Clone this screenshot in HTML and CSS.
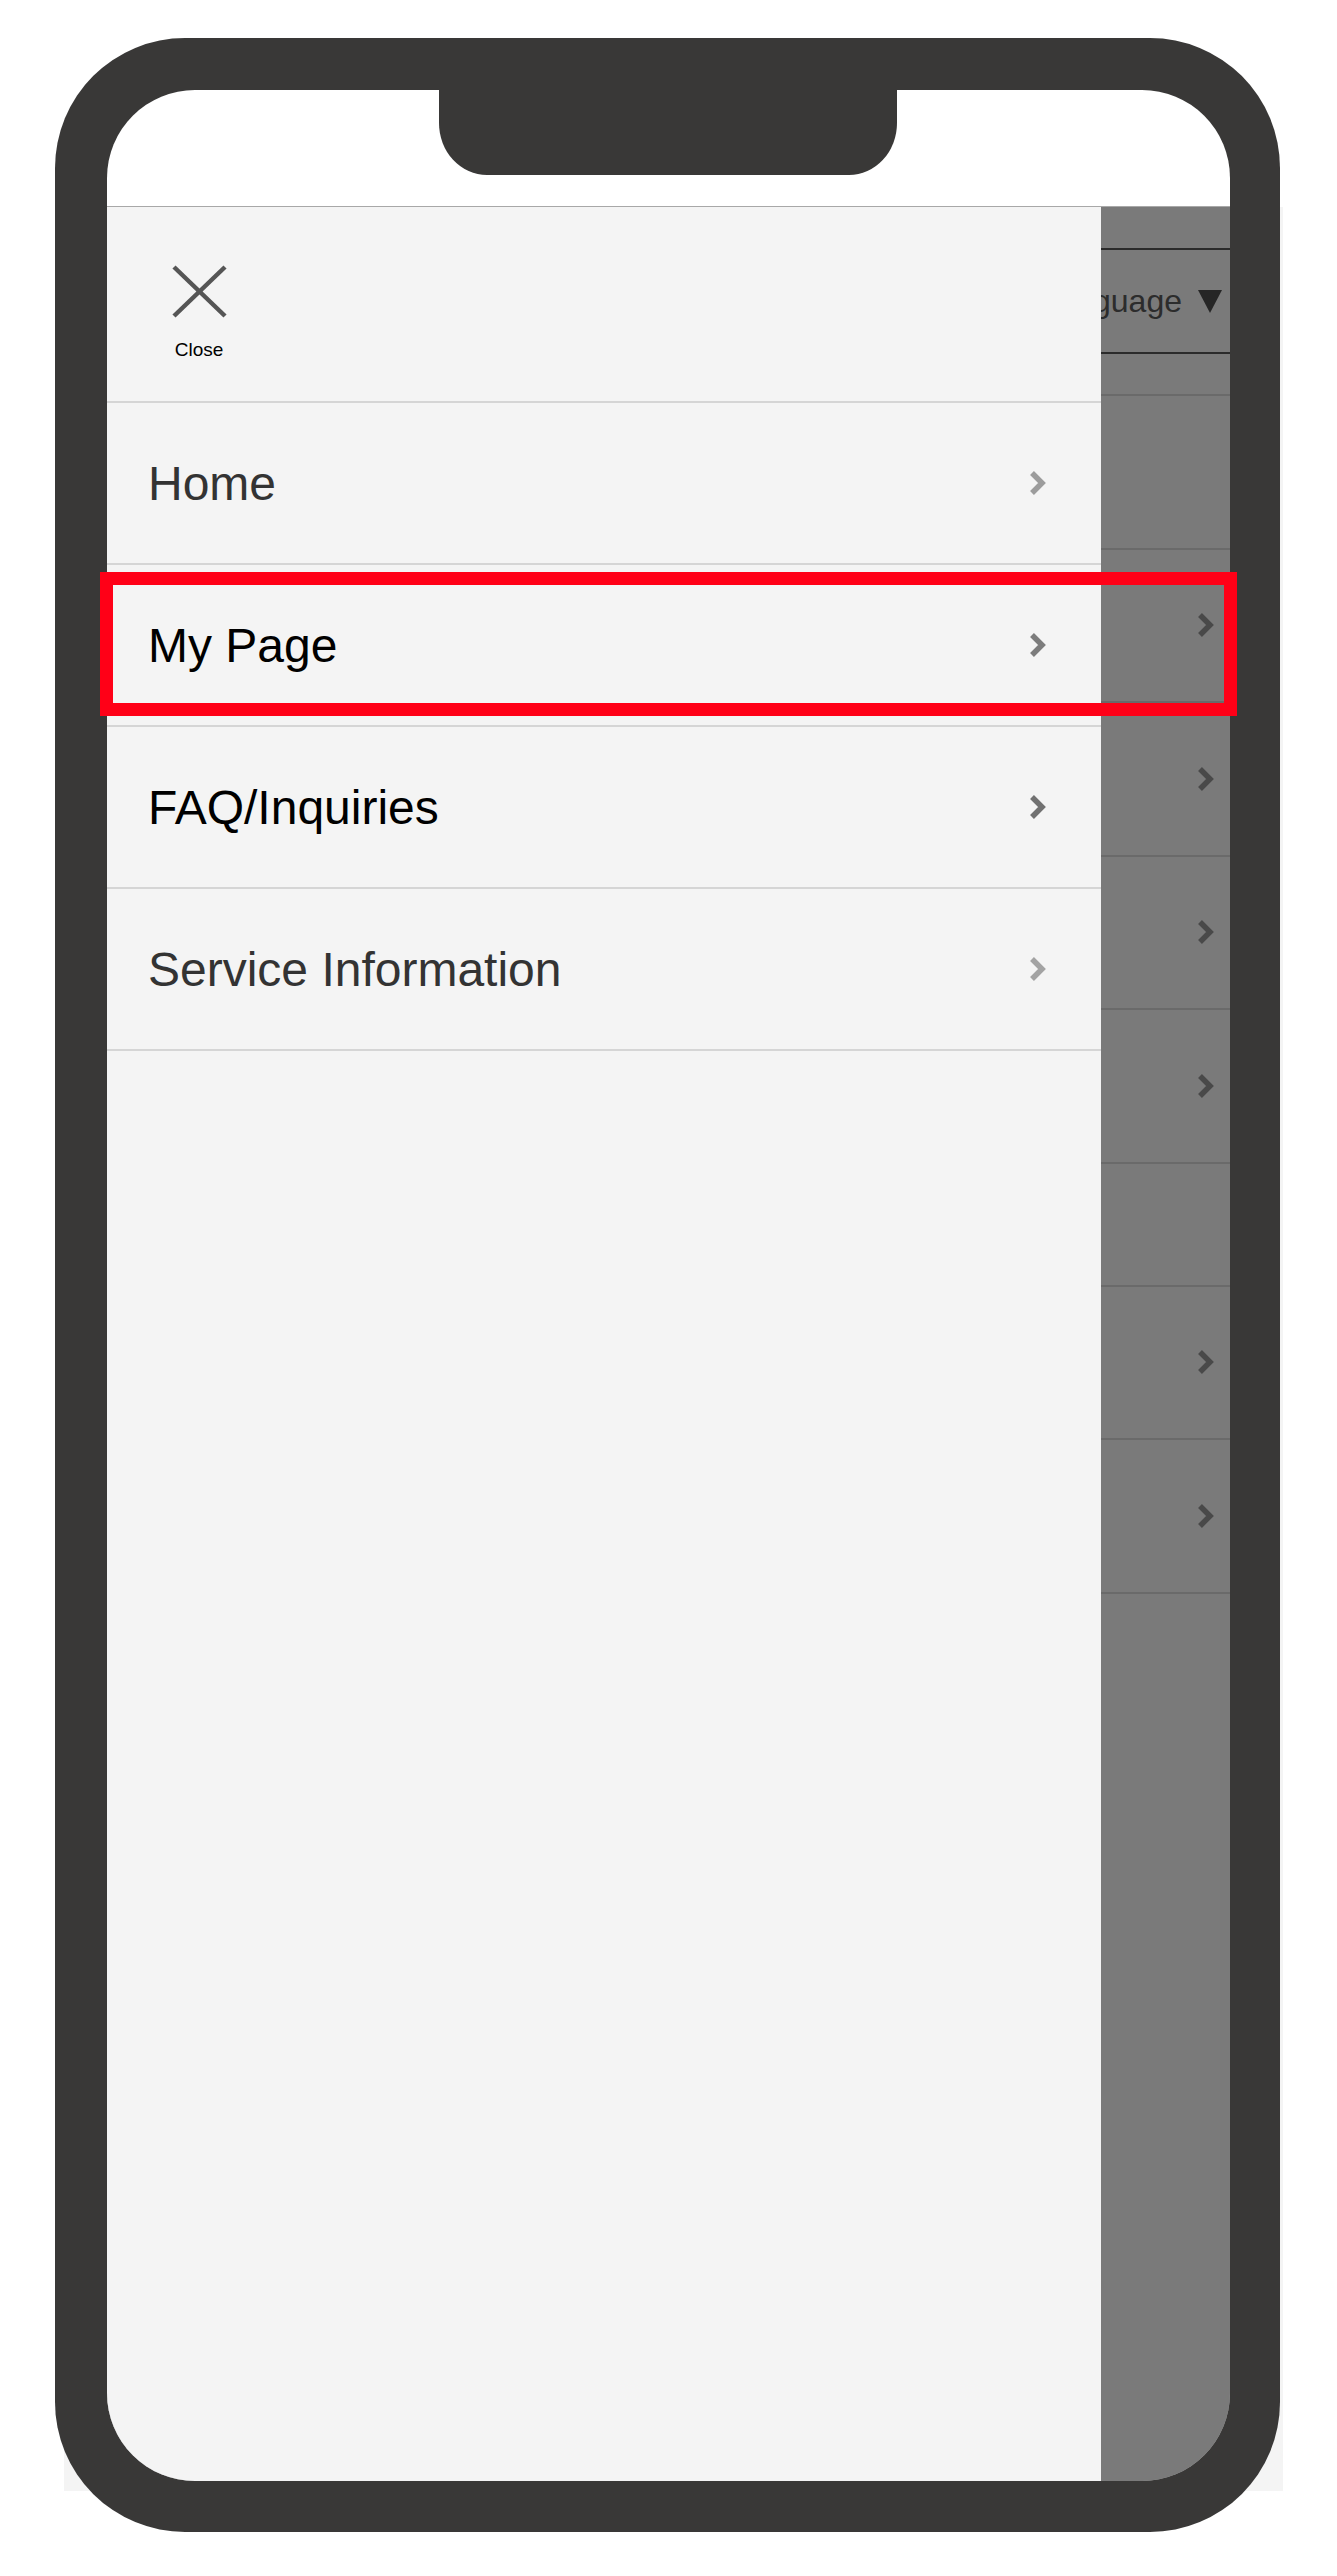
FILE: index.html
```html
<!DOCTYPE html>
<html>
<head>
    <meta charset="UTF-8">
    <meta name="viewport" content="width=device-width, initial-scale=1.0">
    <title>Menu</title>
    <link rel="stylesheet" href="styles.css">
</head>
<body>
    <div class="stage">
        <div class="backdrop"></div>
        <div class="device">
            <div class="screen">
                <div class="notch"></div>
                <div class="statusbar"></div>
                <div class="viewport">
                    <!-- page under the drawer -->
                    <div class="page">
                        <div class="page-header">
                            <div class="lang-select">Language <span class="caret"></span></div>
                        </div>
                        <ul class="page-nav">
                            <li></li>
                            <li><svg class="chev" viewBox="0 0 17 24"><polyline points="3,2 13,12 3,22"/></svg></li>
                            <li><svg class="chev" viewBox="0 0 17 24"><polyline points="3,2 13,12 3,22"/></svg></li>
                            <li><svg class="chev" viewBox="0 0 17 24"><polyline points="3,2 13,12 3,22"/></svg></li>
                            <li><svg class="chev" viewBox="0 0 17 24"><polyline points="3,2 13,12 3,22"/></svg></li>
                            <li class="short"></li>
                            <li><svg class="chev" viewBox="0 0 17 24"><polyline points="3,2 13,12 3,22"/></svg></li>
                            <li><svg class="chev" viewBox="0 0 17 24"><polyline points="3,2 13,12 3,22"/></svg></li>
                        </ul>
                    </div>
                    <div class="scrim"></div>

                    <nav class="drawer">
                        <div class="drawer-head">
                            <button class="close-btn">
                                <svg class="close-icon" viewBox="0 0 55 53">
                                    <line x1="2" y1="2" x2="53" y2="51"/>
                                    <line x1="53" y1="2" x2="2" y2="51"/>
                                </svg>
                                <span>Close</span>
                            </button>
                        </div>
                        <ul class="drawer-menu">
                            <li class="item-home"><a href="#">Home<svg class="chev" viewBox="0 0 17 24"><polyline points="3,2 13,12 3,22"/></svg></a></li>
                            <li class="item-mypage"><a href="#">My Page<svg class="chev" viewBox="0 0 17 24"><polyline points="3,2 13,12 3,22"/></svg></a></li>
                            <li class="item-faq"><a href="#">FAQ/Inquiries<svg class="chev" viewBox="0 0 17 24"><polyline points="3,2 13,12 3,22"/></svg></a></li>
                            <li class="item-service"><a href="#">Service Information<svg class="chev" viewBox="0 0 17 24"><polyline points="3,2 13,12 3,22"/></svg></a></li>
                        </ul>
                    </nav>
                </div>
            </div>
        </div>
        <div class="highlight"></div>
    </div>
</body>
</html>
```

FILE: styles.css
```css
/* page */
body {
    margin: 0;
    padding: 0;
    background-color: #fff;
    font-family: "Liberation Sans", Arial, sans-serif;
}

ul {
    list-style: none;
    margin: 0;
    padding: 0;
}

.stage {
    position: relative;
    width: 1337px;
    height: 2576px;
    padding-top: 38px;
    box-sizing: border-box;
}

.backdrop {
    position: absolute;
    left: 64px;
    top: 207px;
    width: 1219px;
    height: 2284px;
    background-color: #f4f4f4;
}

/* phone frame */
.device {
    position: relative;
    margin-left: 55px;
    width: 1225px;
    height: 2494px;
    padding: 52px 50px 51px 52px;
    box-sizing: border-box;
    background-color: #393837;
    border-radius: 130px;
}

.screen {
    position: relative;
    height: 100%;
    display: flex;
    flex-direction: column;
    background-color: #fff;
    border-radius: 88px;
    overflow: hidden;
}

.notch {
    position: absolute;
    left: 332px;
    top: 0;
    width: 458px;
    height: 85px;
    background-color: #393837;
    border-radius: 0 0 48px 48px / 0 0 52px 52px;
    z-index: 2;
}

.statusbar {
    height: 116px;
    flex-shrink: 0;
    border-bottom: 1px solid #a8a8a8;
}

.viewport {
    position: relative;
    flex: 1;
    overflow: hidden;
}

/* page under the drawer */
.page {
    padding-top: 41px;
}

.lang-select {
    height: 106px;
    box-sizing: border-box;
    border-top: 2px solid #5a5a5a;
    border-bottom: 2px solid #5a5a5a;
    display: flex;
    align-items: center;
    justify-content: flex-end;
    padding-right: 8px;
    font-size: 32px;
    color: #5c5c5c;
}

.caret {
    display: inline-block;
    margin-left: 16px;
    width: 0;
    height: 0;
    border-left: 12px solid transparent;
    border-right: 12px solid transparent;
    border-top: 23px solid #505050;
}

.page-nav {
    margin-top: 40px;
    border-top: 2px solid #ddd;
}

.page-nav li {
    height: 153.5px;
    box-sizing: border-box;
    border-bottom: 2px solid #ddd;
    display: flex;
    align-items: center;
    justify-content: flex-end;
    padding-right: 16px;
}

.page-nav li.short {
    height: 123px;
}

.page-nav .chev {
    color: #9a9a9a;
}

.scrim {
    position: absolute;
    left: 0;
    top: 0;
    right: 0;
    bottom: 0;
    background-color: rgba(0, 0, 0, 0.52);
}

/* drawer */
.drawer {
    position: absolute;
    left: 0;
    top: 0;
    bottom: 0;
    width: 994px;
    background-color: #f4f4f4;
}

.drawer-head {
    height: 196px;
    box-sizing: border-box;
    border-bottom: 2px solid #d5d5d5;
    padding: 58px 0 0 62px;
}

.close-btn {
    display: flex;
    flex-direction: column;
    align-items: center;
    width: 60px;
    padding: 0;
    border: none;
    background: none;
    font-family: inherit;
    font-size: 19px;
    line-height: 22px;
    color: #000;
    cursor: pointer;
}

.close-icon {
    width: 55px;
    height: 53px;
    margin-bottom: 21px;
}

.close-icon line {
    stroke: #555;
    stroke-width: 4.5;
}

.drawer-menu li {
    height: 162px;
    box-sizing: border-box;
    border-bottom: 2px solid #d5d5d5;
}

.drawer-menu a {
    height: 100%;
    display: flex;
    align-items: center;
    justify-content: space-between;
    padding: 0 55px 0 41px;
    font-size: 48px;
    text-decoration: none;
    color: #333;
}

.chev {
    width: 17px;
    height: 24px;
}

.chev polyline {
    fill: none;
    stroke: currentColor;
    stroke-width: 5.5;
}

.item-home .chev {
    color: #9c9c9c;
}

.item-mypage a,
.item-faq a {
    color: #000;
}

.item-mypage .chev {
    color: #7c7c7c;
}

.item-faq .chev {
    color: #717171;
}

.item-service .chev {
    color: #a3a3a3;
}

/* red marker round the selected row */
.highlight {
    position: absolute;
    left: 100px;
    top: 572px;
    width: 1137px;
    height: 144px;
    box-sizing: border-box;
    border: 13px solid #ff0017;
}
```
